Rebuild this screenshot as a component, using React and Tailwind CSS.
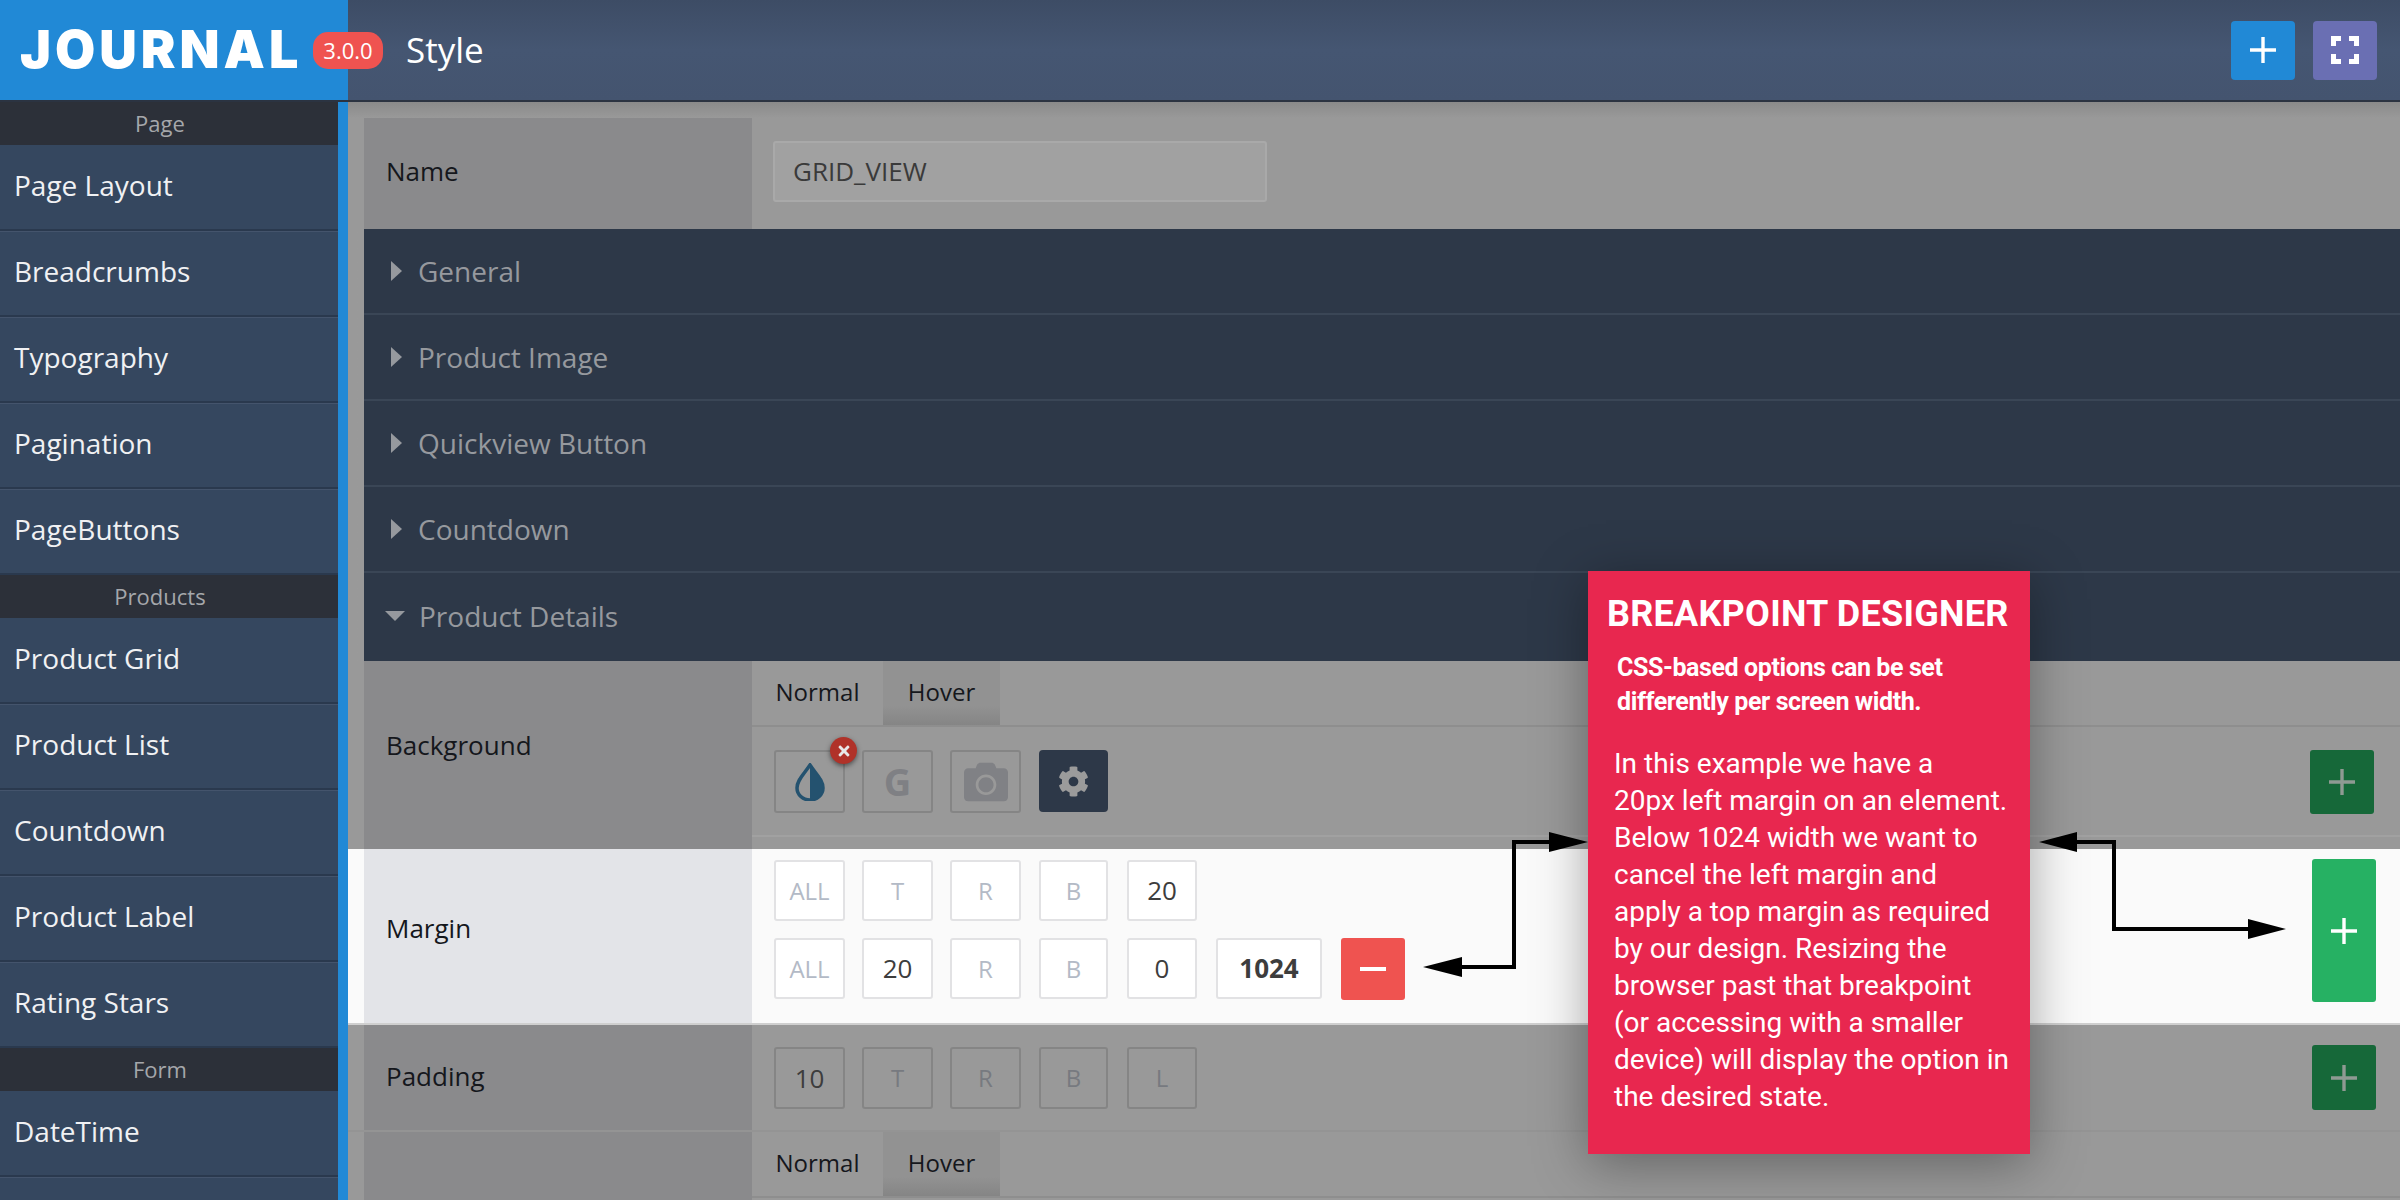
import { FaCamera, FaCog, FaTimes } from 'react-icons/fa';

const sidebar = [
  { title: 'Page', items: ['Page Layout', 'Breadcrumbs', 'Typography', 'Pagination', 'PageButtons'] },
  { title: 'Products', items: ['Product Grid', 'Product List', 'Countdown', 'Product Label', 'Rating Stars'] },
  { title: 'Form', items: ['DateTime', ''] },
];

const accordion = ['General', 'Product Image', 'Quickview Button', 'Countdown', 'Product Details'];

function Plus({ size = 28, className = '' }) {
  return (
    <svg width={size} height={size} viewBox="0 0 28 28" className={className}>
      <path d="M14 1v26M1 14h26" stroke="currentColor" strokeWidth="3.4" fill="none" />
    </svg>
  );
}

function Box({ children, dim, active, className = 'w-[71px]' }) {
  return (
    <div
      className={`flex items-center justify-center rounded-[3px] border-2 ${active ? 'text-[26px]' : 'text-[24px]'} ${className} ${
        dim ? 'border-[#858585]' : 'border-[#e2e2e4] bg-white'
      } ${active ? 'text-[#3d3d3d]' : dim ? 'text-[#777a80]' : 'text-[#b3bac6]'}`}
    >
      {children}
    </div>
  );
}

function Tabs() {
  return (
    <div className="flex h-[66px] border-b-2 border-[#8e8e8e] text-[24px] text-[#15171c]">
      <div className="flex w-[131px] items-start justify-center pt-[13px]">Normal</div>
      <div className="flex w-[117px] items-start justify-center bg-gradient-to-b from-[#929292] from-70% to-[#858585] pt-[13px]">Hover</div>
    </div>
  );
}

function Row({ label, light, className, labelClass = '', children }) {
  return (
    <div className={`flex ${light ? 'bg-[#fafafa]' : 'bg-[#999999]'} ${className}`}>
      <div className="w-4 shrink-0" />
      <div
        className={`flex w-[388px] shrink-0 items-center pl-[22px] text-[26px] text-[#15171c] ${labelClass} ${
          light ? 'bg-[#e3e4e8]' : 'bg-[#8a8a8c]'
        }`}
      >
        {label}
      </div>
      <div className="relative min-w-0 flex-1">{children}</div>
    </div>
  );
}

function Drop() {
  return (
    <svg width="32" height="38" viewBox="0 0 32 38">
      <path d="M16 2C10 11 3 17 3 25a13 12 0 0 0 26 0C29 17 22 11 16 2Z" fill="none" stroke="#24526f" strokeWidth="3.5" />
      <path d="M16 2C22 11 29 17 29 25a13 12 0 0 1-13 12Z" fill="#24526f" />
    </svg>
  );
}

function Arrows() {
  return (
    <svg className="pointer-events-none absolute top-0 left-0" width="2400" height="1200">
      <path d="M1450 967H1514V842H1562" fill="none" stroke="#000" strokeWidth="4" />
      <path d="M1423 967L1462 957V977Z M1588 842L1549 832V852Z" fill="#000" />
      <path d="M2065 842H2114V929H2255" fill="none" stroke="#000" strokeWidth="4" />
      <path d="M2039 842L2077 832V852Z M2286 929L2248 919V939Z" fill="#000" />
    </svg>
  );
}

export default function App() {
  return (
    <div className="relative h-[1200px] overflow-hidden bg-[#999999] font-['Open_Sans',sans-serif]">
      <header className="flex h-[102px] border-b-2 border-[#2b3341] bg-gradient-to-b from-[#3d4c65] via-[#455672] to-[#44546f]">
        <div className="relative flex w-[348px] shrink-0 items-center bg-[#2189d6] pl-[20px]">
          <span className="font-['Inter',sans-serif] text-[52px] leading-none font-black tracking-[4px] text-white">JOURNAL</span>
          <span className="absolute top-[32px] left-[313px] flex h-[37px] w-[70px] items-center justify-center rounded-[15px] bg-[#ef5350] text-[22px] text-white">
            3.0.0
          </span>
        </div>
        <div className="flex flex-1 items-center justify-between pr-[23px] pl-[58px]">
          <span className="text-[35px] text-white">Style</span>
          <div className="flex gap-[18px]">
            <div className="flex h-[59px] w-[64px] items-center justify-center rounded-[4px] bg-[#2189d6] text-white">
              <Plus />
            </div>
            <div className="flex h-[59px] w-[64px] items-center justify-center rounded-[4px] bg-[#6a6fb3]">
              <svg width="28" height="28" viewBox="0 0 28 28" fill="none" stroke="#fff" strokeWidth="5">
                <path d="M2.5 10V2.5H10M18 2.5H25.500V10M25.500 18V25.500H18M10 25.500H2.500V18" />
              </svg>
            </div>
          </div>
        </div>
      </header>

      <div className="flex">
        <aside className="w-[348px] shrink-0 border-r-[10px] border-[#2189d6] bg-[#35475f]">
          {sidebar.map((group) => (
            <div key={group.title}>
              <div className="flex h-[43px] items-center justify-center bg-[#2c3039] pr-[18px] text-[22px] text-[#a5a7ab]">{group.title}</div>
              {group.items.map((item, idx) => (
                <div
                  key={idx}
                  className="flex h-[86px] items-center border-b-2 border-[#2a394e] pb-[4px] pl-[14px] text-[28px] text-[#f0f1f3] shadow-[0_1px_0_#44546c]"
                >
                  {item}
                </div>
              ))}
            </div>
          ))}
        </aside>

        <main className="min-w-0 flex-1 bg-gradient-to-b from-[#8a8a8a] to-[#999999] to-[16px] pt-4">
          <Row label="Name" labelClass="pb-[4px]" className="h-[111px]">
            <div className="absolute top-[23px] left-[21px] flex h-[61px] w-[494px] items-center rounded-[3px] border-2 border-[#a9a9a9] bg-[#a1a1a1] pl-[18px] text-[26px] text-[#3a3a3a]">
              GRID_VIEW
            </div>
          </Row>

          {accordion.map((name, idx) => (
            <div
              key={name}
              className={`ml-4 flex items-center gap-[16px] bg-[#2d3848] pl-[27px] text-[28px] text-[#96999e] ${
                idx === 4 ? 'h-[88px] pb-[2px]' : 'h-[86px] border-b-2 border-[#3a4656]'
              }`}
            >
              {idx === 4 ? (
                <span className="ml-[-6px] mr-[-2px] h-0 w-0 border-x-[10px] border-t-[10px] border-x-transparent border-t-[#96999e]" />
              ) : (
                <span className="h-0 w-0 border-y-[10px] border-l-[11px] border-y-transparent border-l-[#96999e]" />
              )}
              {name}
            </div>
          ))}

          <Row label="Background" labelClass="pb-[20px]" className="h-[188px]">
            <div className="flex h-[176px] flex-col border-b-2 border-[#a1a1a1]">
              <Tabs />
              <div className="flex gap-[17px] pt-[23px] pl-[22px]">
                <div className="relative">
                  <Box dim className="h-[63px] w-[71px]">
                    <Drop />
                  </Box>
                  <span className="absolute top-[-13px] left-[56px] flex h-[27px] w-[27px] items-center justify-center rounded-full bg-[#b03229] text-[16px] text-[#e8e8e8] shadow-[0_2px_5px_rgba(0,0,0,0.5)]">
                    <FaTimes />
                  </span>
                </div>
                <Box dim className="h-[63px] w-[71px]">
                  <span className="text-[38px] font-bold text-[#7f8084]">G</span>
                </Box>
                <Box dim className="h-[63px] w-[71px]">
                  <FaCamera className="text-[44px] text-[#808185]" />
                </Box>
                <div className="ml-[1px] flex h-[62px] w-[69px] items-center justify-center rounded-[4px] bg-[#2d3848] text-[31px] text-[#9b9b9b]">
                  <FaCog />
                </div>
              </div>
            </div>
            <div className="absolute top-[89px] right-[26px] flex h-[64px] w-[64px] items-center justify-center rounded-[3px] bg-[#166839] text-[#8f9a93]">
              <Plus />
            </div>
          </Row>

          <Row label="Margin" light labelClass="pb-[16px]" className="h-[176px] border-b-2 border-[#cfcfcf]">
            <div className="flex flex-col gap-[17px] pt-[11px] pl-[22px]">
              <div className="flex h-[61px] gap-[17px]">
                <Box>ALL</Box>
                <Box>T</Box>
                <Box>R</Box>
                <Box className="ml-[1px] w-[69px]">B</Box>
                <Box active className="ml-[2px] w-[70px]">20</Box>
              </div>
              <div className="flex h-[61px] gap-[17px]">
                <Box>ALL</Box>
                <Box active>20</Box>
                <Box>R</Box>
                <Box className="ml-[1px] w-[69px]">B</Box>
                <Box active className="ml-[2px] w-[70px]">0</Box>
                <Box active className="ml-[2px] w-[106px] font-bold">1024</Box>
                <div className="ml-[2px] flex h-[62px] w-[64px] items-center justify-center rounded-[3px] bg-[#ef5350] text-white">
                  <svg width="26" height="4" viewBox="0 0 26 4"><path d="M0 2h26" stroke="currentColor" strokeWidth="4" /></svg>
                </div>
              </div>
            </div>
            <div className="absolute top-[10px] right-[24px] flex h-[143px] w-[64px] items-center justify-center rounded-[3px] bg-[#26b163] text-white">
              <Plus />
            </div>
          </Row>

          <Row label="Padding" labelClass="pb-[2px]" className="h-[107px] border-b-2 border-[#949494]">
            <div className="mt-[22px] flex h-[62px] gap-[17px] pl-[22px]">
              <Box dim active>10</Box>
              <Box dim>T</Box>
              <Box dim>R</Box>
              <Box dim className="ml-[1px] w-[69px]">B</Box>
              <Box dim className="ml-[2px] w-[70px]">L</Box>
            </div>
            <div className="absolute top-[20px] right-[24px] flex h-[65px] w-[64px] items-center justify-center rounded-[3px] bg-[#166839] text-[#8f9a93]">
              <Plus />
            </div>
          </Row>

          <Row label="" className="h-[80px]">
            <Tabs />
          </Row>
        </main>
      </div>

      <Arrows />

      <div className="absolute top-[571px] left-[1588px] h-[583px] w-[442px] bg-[#e8274f] font-['Roboto',sans-serif] text-white shadow-[0_10px_50px_rgba(0,0,0,0.35)]">
        <h2 className="mt-[21px] ml-[19px] text-[36px] leading-[44px] font-bold tracking-[0.25px] whitespace-nowrap">BREAKPOINT DESIGNER</h2>
        <p className="mt-[15px] ml-[29px] text-[25px] leading-[34px] font-bold tracking-[-0.4px] whitespace-nowrap">
          CSS-based options can be set<br />differently per screen width.
        </p>
        <p className="mt-[26px] ml-[26px] text-[28px] leading-[37px] whitespace-nowrap">
          In this example we have a<br />
          20px left margin on an element.<br />
          Below 1024 width we want to<br />
          cancel the left margin and<br />
          apply a top margin as required<br />
          by our design. Resizing the<br />
          browser past that breakpoint<br />
          (or accessing with a smaller<br />
          device) will display the option in<br />
          the desired state.
        </p>
      </div>
    </div>
  );
}
